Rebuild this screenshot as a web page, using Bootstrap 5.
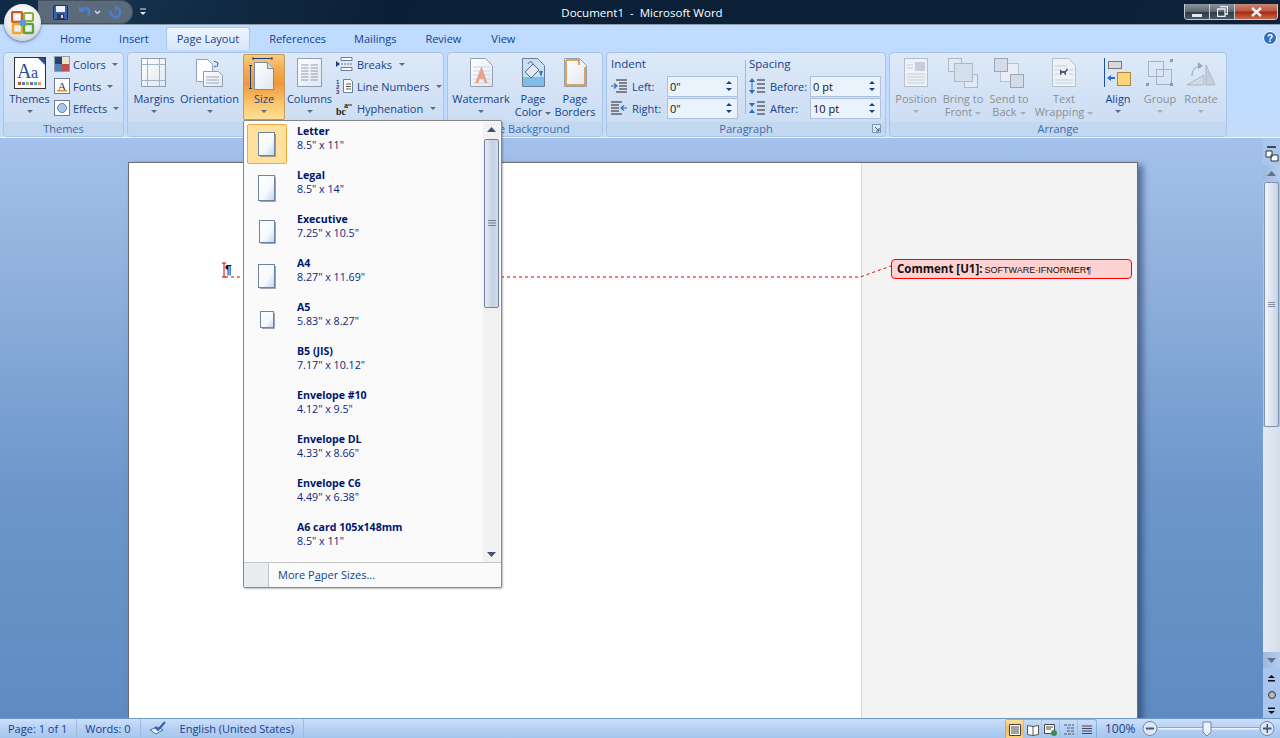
<!DOCTYPE html>
<html lang="en">
<head>
  <meta charset="UTF-8">
  <title>Document1 - Microsoft Word</title>
  <meta name="viewport" content="width=device-width, initial-scale=1">
  <link href="https://cdn.jsdelivr.net/npm/bootstrap@5.3.3/dist/css/bootstrap.min.css" rel="stylesheet">
  <style>
    html, body { height: 100%; overflow: hidden; }
    body { font-family: "Open Sans", "Liberation Sans", sans-serif; font-size: 11px; line-height: 13px; color: #15428b; background: #6a94c8; }
    svg { display: block; flex: none; }
    .app-shell { height: 738px; position: relative; }

    /* title bar */
    .title-bar { height: 25px; background: linear-gradient(100deg, #0f2a44 0%, #16324d 8%, #0b2036 30%, #0d2238 100%); border-bottom: 1px solid #8d9cab; color: #fff; font-size: 11.5px; }
    .title-side { flex: 1 1 0; }
    .title-text { padding-left: 4px; }
    .qat-pill { margin-left: 38px; width: 95px; height: 24px; background: #5b6b7c; border-radius: 0 12px 12px 0; border: 1px solid #44525f; border-left: 0; padding-left: 15px; }
    .qat-undo { margin-left: 8px; }
    .qat-drop { margin-left: 3px; }
    .qat-redo { margin-left: 7px; }
    .qat-more { margin-left: 6px; }
    .win-btns { margin-left: auto; margin-right: 2px; height: 16px; border: 1px solid #c3ccd5; border-top: 0; border-radius: 0 0 4px 4px; overflow: hidden; align-self: flex-start; }
    .win-btn { width: 25px; background: linear-gradient(#8a949e, #5d6873 50%, #2f3a44 55%, #4b5965); border-right: 1px solid #c3ccd5; }
    .win-close { width: 42px; border: 0; background: linear-gradient(#c98876, #ba5a45 45%, #a82a10 55%, #c66a50); }
    .office-orb { position: absolute; left: 4px; top: 4px; width: 37px; height: 37px; border-radius: 50%; background: radial-gradient(circle at 50% 30%, #ffffff 0%, #e8ecef 55%, #b8c2cc 100%); box-shadow: 0 1px 3px rgba(20,40,70,.6); }

    /* tabs */
    .rb-tabs { height: 25px; padding-left: 46px; background: #bfdbff; align-items: flex-end; }
    .rb-tabs .nav-link { padding: 0 14px; height: 23px; line-height: 23px; font-size: 11px; color: #15428b; }
    .rb-tabs .active-tab { margin: 0 5px 0 3px; padding: 0 10px; background: linear-gradient(#eef5fe, #d8e6f9); border: 1px solid #a9c5e8; border-bottom: 0; border-radius: 3px 3px 0 0; color: #15428b; line-height: 21px; }
    .rb-tabs .tab-wide { padding: 0 15px; }
    .help-dot { margin-left: auto; margin-right: 3px; align-self: center; }

    /* ribbon */
    .ribbon { height: 88px; background: linear-gradient(#bfdbff, #bfdbff 60%, #c4dcf8); padding: 2px 3px 0; gap: 3px; border-bottom: 1px solid #e8f2fb; }
    .rb-group { height: 85px; border: 1px solid #a9c4e4; border-radius: 4px; background: linear-gradient(#dde9f8, #cfdff4 70%, #c9dbf2); overflow: hidden; }
    .rb-body { height: 70px; padding-left: 3px; }
    .rb-foot { height: 14px; line-height: 14px; text-align: center; background: #c2d8f0; color: #3e6aaa; }
    .g-themes { width: 121px; }
    .g-setup { width: 317px; }
    .g-bg { width: 156px; }
    .g-para { width: 280px; }
    .g-arrange { width: 338px; }
    .g-arrange .rb-body { padding-left: 2px; }

    .big-btn { height: 66px; margin-top: 1px; text-align: center; align-items: center; }
    .big-ico { height: 32px; margin-top: 3px; margin-bottom: 3px; display: flex; align-items: center; justify-content: center; }
    .is-off { color: #8f8f8f; }
    .w40 { width: 40px; } .w42 { width: 42px; } .w44 { width: 44px; } .w45 { width: 45px; }
    .w46 { width: 46px; } .w47 { width: 47px; } .w48 { width: 48px; } .w60 { width: 60px; }
    .w64 { width: 64px; } .w65 { width: 65px; }
    .size-hot { margin-left: 1px; margin-right: 1px; background: linear-gradient(#f8cd85, #f3a94f 25%, #f0973a 45%, #f9c76c 75%, #fee195); outline: 1px solid #c09b5a; outline-offset: -1px; border-radius: 2px; }
    .tri { width: 0; height: 0; border-left: 3px solid transparent; border-right: 3px solid transparent; border-top: 3px solid #566d8e; display: inline-block; vertical-align: middle; margin-left: 3px; }
    .tri-solo { margin: 5px 0 0; display: block; }
    .is-off .tri { border-top-color: #a8aeb5; }

    .small-col { padding-top: 0; }
    .small-btn { height: 22px; gap: 3px; align-items: center; white-space: nowrap; }
    .g-themes .small-col { margin-left: 2px; }
    .g-setup .small-col { margin-left: 3px; }
    .g-setup .small-btn { gap: 4px; }

    /* paragraph group */
    .para-col { padding: 4px 0 0 1px; }
    .para-head { height: 14px; line-height: 14px; font-size: 11.5px; margin-bottom: 4px; }
    .para-row { height: 22px; align-items: center; }
    .col-indent { width: 134px; }
    .col-space { width: 136px; margin-left: 2px; }
    .para-divider { width: 1px; height: 54px; margin: 7px 0 0 1px; background: #9fb9d9; }
    .para-label { width: 35px; margin-left: 5px; }
    .col-space .para-label { width: 40px; margin-left: 5px; }
    .spin-box { width: 71px; height: 21px; border: 1px solid #abc1de; background: #eaf2fc; padding-left: 2px; color: #111; font-size: 11px; line-height: 19px; justify-content: space-between; }
    .spin-arrows { width: 16px; justify-content: center; align-items: center; gap: 4px; }
    .spin-up { width: 0; height: 0; border-left: 3px solid transparent; border-right: 3px solid transparent; border-bottom: 3px solid #15428b; }
    .spin-down { width: 0; height: 0; border-left: 3px solid transparent; border-right: 3px solid transparent; border-top: 3px solid #15428b; }
    .launcher { position: absolute; right: 4px; bottom: 3px; }

    /* document */
    .doc-area { height: 580px; background: linear-gradient(#a3c1ec, #8fb0dc 25%, #6d97cb 60%, #5e8bc2); }
    .doc-scroll { padding: 24px 0 0 128px; overflow: hidden; }
    .doc-page { position: relative; width: 1010px; height: 600px; background: #fff; border: 1px solid #6d6d6d; border-bottom: 0; box-shadow: 5px 3px 6px rgba(30,50,90,.55); }
    .doc-text { width: 732px; }
    .doc-markup { width: 276px; background: #f3f3f3; border-left: 1px solid #d9d9d9; padding: 96px 6px 0 29px; }
    .balloon { height: 20px; width: 241px; background: #ffd2d2; border: 1px solid #f00; border-radius: 4px; padding-left: 5px; line-height: 18px; color: #111; font-family: "Liberation Sans", sans-serif; white-space: nowrap; }
    .balloon b { font-family: "Open Sans", sans-serif; font-size: 11.5px; font-weight: 700; }
    .balloon span { font-size: 9px; margin-left: 2px; }
    .leader { position: absolute; left: 0; top: 0; pointer-events: none; }
    .para-mark { position: absolute; left: 96px; top: 100px; color: #111; font-size: 12px; line-height: 14px; font-weight: 700; font-family: "Liberation Sans", sans-serif; }

    /* scroll bar right */
    .v-scroll { width: 17px; background: #a9c6ef; }
    .vs-top { height: 27px; padding-top: 8px; align-items: center; }
    .vs-split { width: 9px; height: 2px; background: #3a4a60; margin-bottom: 2px; }
    .vs-arrow { height: 16px; background: linear-gradient(90deg, #9db9dd, #b5cdec); align-items: center; justify-content: center; }
    .vs-thumb { height: 245px; margin: 1px 1px 0; background: linear-gradient(90deg, #f0f4f9, #dbe5f0 50%, #c3d2e4); border: 1px solid #7f93ad; border-radius: 2px; align-items: center; justify-content: center; }
    .vs-track { flex: 1 1 auto; background: linear-gradient(90deg, #e3eaf3, #d4deeb); }
    .vs-browse { height: 50px; padding-top: 7px; align-items: center; justify-content: space-between; padding-bottom: 4px; }

    /* status bar */
    .status-bar { height: 20px; background: linear-gradient(#cbe0fa, #b5d0f3 50%, #a6c6ee); border-top: 1px solid #7197c8; line-height: 19px; color: #15428b; }
    .st-cell { padding: 0 9px 0 8px; border-right: 1px solid #9ebde2; white-space: nowrap; }
    .st-spell { border-right: 0; padding-right: 5px; }
    .st-views { margin-left: auto; margin-right: 8px; border: 1px solid #8eafd8; border-radius: 3px 3px 0 0; border-bottom: 0; height: 19px; }
    .st-view { width: 18px; height: 19px; align-items: center; justify-content: center; border-right: 1px solid #a6c1e3; }
    .st-view-on { background: linear-gradient(#fddf9c, #f8b85f 50%, #fbd27a); }
    .st-zoom { width: 29px; font-size: 12px; }
    .zoom-track { width: 101px; height: 19px; }
    .zoom-end { margin-right: 5px; }

    /* size menu */
    .size-menu { position: absolute; left: 243px; top: 120px; width: 259px; height: 468px; background: #fafafa; border: 1px solid #868686; border-radius: 2px; box-shadow: 1px 1px 2px rgba(0,0,0,.25); z-index: 5; padding-top: 1px; }
    .size-list { height: 440px; }
    .size-items { width: 239px; }
    .size-item { height: 44px; }
    .size-cell { width: 40px; height: 40px; margin: 2px 0 0 3px; display: flex; align-items: center; justify-content: center; border: 1px solid transparent; border-radius: 2px; }
    .size-cell-on { background: #ffe09c; border-color: #f1a83e; }
    .size-txt { margin: 2px 0 0 10px; line-height: 14px; color: #0c1f7a; font-size: 10.7px; }
    .size-txt b { display: block; color: #00156e; font-weight: 700; font-size: 10.6px; }
    .menu-scroll { width: 17px; background: #f1f1f1; }
    .ms-arrow { height: 15px; align-items: center; justify-content: center; }
    .ms-thumb { height: 169px; margin: 2px 1px 0; background: linear-gradient(90deg, #e6ecf4, #c3d1e2 60%, #d5deea); border: 1px solid #6d82a3; border-radius: 2px; align-items: center; justify-content: center; }
    .ms-track { flex: 1 1 auto; }
    .size-foot { height: 25px; border-top: 1px solid #c5c5c5; }
    .foot-ico { width: 25px; background: #e9edf1; border-right: 1px solid #c5c5c5; }
    .foot-txt { padding-left: 9px; line-height: 24px; color: #15428b; }
  </style>
</head>
<body>

<svg width="0" height="0" class="position-absolute">
  <defs>
    <linearGradient id="pageFill" x1="0" y1="0" x2="1" y2="1">
      <stop offset="0" stop-color="#ffffff"/><stop offset=".6" stop-color="#f6f9fd"/><stop offset="1" stop-color="#bcd4ee"/>
    </linearGradient>
    <linearGradient id="docFill" x1="0" y1="0" x2="1" y2="1">
      <stop offset="0" stop-color="#ffffff"/><stop offset="1" stop-color="#dfe7f2"/>
    </linearGradient>
  </defs>
</svg>

<div class="app-shell d-flex flex-column">

  <!-- Title bar -->
  <div class="title-bar d-flex align-items-center flex-none">
    <div class="title-side d-flex align-items-center">
      <div class="qat-pill d-flex align-items-center">
        <svg width="15" height="15" viewBox="0 0 15 15"><rect x=".5" y=".5" width="14" height="14" rx="1" fill="#3b5fb0" stroke="#1b2f66"/><rect x="3" y="1" width="9" height="6" fill="#eef2f8"/><rect x="4" y="9" width="7" height="5" fill="#2c3c58"/><rect x="8" y="10" width="2" height="3" fill="#c9d4e4"/></svg>
        <svg class="qat-undo" width="15" height="14" viewBox="0 0 15 14"><path d="M3 1v6h6L6.800 4.900C9.500 3.800 12 5.500 12 8.200c0 1.700-1 3.200-2.500 4.300 3-.5 5-3 5-5.700C14.500 2.600 9.700.3 5.200 2.900z" fill="#4a7fd0"/></svg>
        <svg class="qat-drop" width="7" height="5" viewBox="0 0 7 5"><path d="M1 1l2.500 2.500L6 1" fill="none" stroke="#dfe6ee" stroke-width="1.200"/></svg>
        <svg class="qat-redo" width="15" height="14" viewBox="0 0 15 14"><path d="M7.500 2.500a4.800 4.800 0 1 1-4.500 3.200" fill="none" stroke="#4a7fd0" stroke-width="2.600"/><path d="M7 0v6l4-3z" fill="#4a7fd0"/></svg>
      </div>
      <svg class="qat-more" width="8" height="8" viewBox="0 0 8 8"><path d="M1 1h6" stroke="#dfe6ee"/><path d="M1 4h6L4 7z" fill="#dfe6ee"/></svg>
    </div>
    <div class="title-text">Document1&nbsp; -&nbsp; Microsoft Word</div>
    <div class="title-side d-flex">
      <div class="win-btns d-flex">
        <div class="win-btn d-flex align-items-center justify-content-center"><svg width="11" height="12" viewBox="0 0 11 12"><rect y="8" width="10" height="3" fill="#e8e8e8"/></svg></div>
        <div class="win-btn d-flex align-items-center justify-content-center"><svg width="11" height="11" viewBox="0 0 11 11"><path d="M3 .5h7.500v7.500H8M.5 3h7.500v7.500H.5z" fill="none" stroke="#eee" stroke-width="1.300"/></svg></div>
        <div class="win-btn win-close d-flex align-items-center justify-content-center"><svg width="11" height="10" viewBox="0 0 11 10"><path d="M1 1l9 8M10 1l-9 8" stroke="#f4f4f4" stroke-width="2.400"/></svg></div>
      </div>
    </div>
  </div>

  <!-- Office button -->
  <div class="office-orb d-flex align-items-center justify-content-center">
    <svg width="24" height="24" viewBox="0 0 24 24">
      <rect x="1" y="1" width="10" height="10" rx="1.500" fill="none" stroke="#d4582c" stroke-width="2.400"/>
      <rect x="13" y="2" width="9" height="8" rx="1" fill="none" stroke="#8fb13c" stroke-width="2.200"/>
      <rect x="2" y="13" width="9" height="9" rx="1" fill="none" stroke="#f0a81e" stroke-width="2.400"/>
      <rect x="13" y="13" width="9" height="9" rx="1" fill="none" stroke="#5ba33a" stroke-width="2.400"/>
      <rect x="9" y="9" width="6" height="6" fill="#5d9bd8"/>
    </svg>
  </div>

  <!-- Tabs -->
  <ul class="nav rb-tabs flex-none">
    <li class="nav-item"><a class="nav-link" href="#">Home</a></li>
    <li class="nav-item"><a class="nav-link" href="#">Insert</a></li>
    <li class="nav-item"><a class="nav-link active-tab" href="#">Page Layout</a></li>
    <li class="nav-item"><a class="nav-link" href="#">References</a></li>
    <li class="nav-item"><a class="nav-link" href="#">Mailings</a></li>
    <li class="nav-item"><a class="nav-link tab-wide" href="#">Review</a></li>
    <li class="nav-item"><a class="nav-link tab-wide" href="#">View</a></li>
    <li class="help-dot">
      <svg width="14" height="14" viewBox="0 0 14 14"><circle cx="7" cy="7" r="6.500" fill="#2f6fc8" stroke="#fff"/><text x="7" y="10.500" font-size="10" font-weight="700" fill="#fff" text-anchor="middle" font-family="Liberation Sans">?</text></svg>
    </li>
  </ul>

  <!-- Ribbon -->
  <div class="ribbon d-flex">

    <div class="rb-group g-themes d-flex flex-column">
      <div class="rb-body d-flex">
        <div class="big-btn w45 d-flex flex-column">
          <div class="big-ico">
            <svg width="32" height="32" viewBox="0 0 32 32"><rect x=".5" y=".5" width="31" height="31" fill="#fff" stroke="#333"/><path d="M24 1h7v7z" fill="#2e4f9a"/><text x="3" y="21" font-family="Liberation Serif" font-size="20" fill="#1f4ea0">A</text><text x="17" y="21" font-family="Liberation Serif" font-size="16" fill="#1f4ea0">a</text><rect x="4" y="25" width="3" height="3" fill="#c0504d"/><rect x="8" y="25" width="3" height="3" fill="#4f81bd"/><rect x="12" y="25" width="3" height="3" fill="#9bbb59"/><rect x="16" y="25" width="3" height="3" fill="#8064a2"/><rect x="20" y="25" width="3" height="3" fill="#4bacc6"/><rect x="24" y="25" width="3" height="3" fill="#f79646"/></svg>
          </div>
          <div>Themes</div>
          <span class="tri tri-solo"></span>
        </div>
        <div class="small-col">
          <div class="small-btn d-flex"><svg width="16" height="16" viewBox="0 0 16 16"><rect x=".5" y=".5" width="15" height="15" fill="#fff" stroke="#8d9db4"/><rect x="1" y="1" width="7" height="7" fill="#26426e"/><rect x="8" y="1" width="7" height="7" fill="#eee6c6"/><rect x="1" y="8" width="7" height="7" fill="#4f81bd"/><rect x="8" y="8" width="7" height="7" fill="#c0504d"/></svg>Colors<span class="tri"></span></div>
          <div class="small-btn d-flex"><svg width="16" height="16" viewBox="0 0 16 16"><rect x=".5" y=".5" width="15" height="15" fill="#fff" stroke="#6d7f9b"/><text x="8" y="13" text-anchor="middle" font-family="Liberation Serif" font-size="13" fill="#15306e">A</text><rect x="3" y="12" width="10" height="1.500" fill="#e09020"/></svg>Fonts<span class="tri"></span></div>
          <div class="small-btn d-flex"><svg width="16" height="16" viewBox="0 0 16 16"><rect x=".5" y=".5" width="15" height="15" fill="#fff" stroke="#6d7f9b"/><circle cx="8" cy="8" r="4.500" fill="#a8c8ea" stroke="#5a82b4"/></svg>Effects<span class="tri"></span></div>
        </div>
      </div>
      <div class="rb-foot">Themes</div>
    </div>

    <div class="rb-group g-setup d-flex flex-column">
      <div class="rb-body d-flex">
        <div class="big-btn w46 d-flex flex-column">
          <div class="big-ico"><svg width="26" height="30" viewBox="0 0 26 30"><rect x=".5" y=".5" width="24" height="28" fill="url(#docFill)" stroke="#8f9fb4"/><path d="M6.500 1v27M18.500 1v27M1 6.500h23M1 22.500h23" stroke="#a5b3c6" fill="none"/></svg></div>
          <div>Margins</div><span class="tri tri-solo"></span>
        </div>
        <div class="big-btn w65 d-flex flex-column">
          <div class="big-ico"><svg width="30" height="30" viewBox="0 0 30 30"><path d="M1.500 1.500h11l5 5v17h-16z" fill="#fff" stroke="#8f9fb4"/><path d="M8.500 13.500h15l4 4v11h-19z" fill="url(#docFill)" stroke="#8f9fb4"/><path d="M11 19h13M11 22h13M11 25h13" stroke="#9aa9bd"/><path d="M19 3l4 2-1 4M19 9l2-1" fill="none" stroke="#4a5f80"/></svg></div>
          <div>Orientation</div><span class="tri tri-solo"></span>
        </div>
        <div class="big-btn w42 size-hot d-flex flex-column">
          <div class="big-ico"><svg width="30" height="33" viewBox="0 0 30 33"><path d="M4 1.500h19M4 0v3M23 0v3M0 8.500h3M0 31.500h3M1.500 8v24" stroke="#1f3f78" fill="none"/><path d="M5.500 5.500h13l6 6v21h-19z" fill="url(#docFill)" stroke="#7c8ca4"/><path d="M18.500 5.500v6h6" fill="#cfd9e8" stroke="#7c8ca4"/></svg></div>
          <div>Size</div><span class="tri tri-solo"></span>
        </div>
        <div class="big-btn w47 d-flex flex-column">
          <div class="big-ico"><svg width="26" height="30" viewBox="0 0 26 30"><rect x=".5" y=".5" width="24" height="28" fill="url(#docFill)" stroke="#8f9fb4"/><path d="M4 7h7.500M13.500 7H21M4 10h7.500M13.500 10H21M4 13h7.500M13.500 13H21M4 16h7.500M13.500 16H21M4 19h7.500M13.500 19H21M4 22h7.500M13.500 22H21" stroke="#8d9cb0"/></svg></div>
          <div>Columns</div><span class="tri tri-solo"></span>
        </div>
        <div class="small-col">
          <div class="small-btn d-flex"><svg width="17" height="16" viewBox="0 0 17 16"><path d="M5 1.500h11v3H5zM5 11.500h11v3H5z" fill="#fff" stroke="#6a7d98"/><path d="M5 8h11" stroke="#6a7d98" stroke-dasharray="2 1"/><path d="M0 5l4 3-4 3z" fill="#1f3f78"/></svg>Breaks<span class="tri"></span></div>
          <div class="small-btn d-flex"><svg width="17" height="16" viewBox="0 0 17 16"><path d="M7.500 1.500h7l2 2v11h-9z" fill="#fff" stroke="#6a7d98"/><path d="M10 6h5M10 8.500h5M10 11h5" stroke="#555"/><text x="0" y="6" font-size="6" font-weight="700" fill="#1f3f78" font-family="Liberation Sans">1</text><text x="0" y="11" font-size="6" font-weight="700" fill="#1f3f78" font-family="Liberation Sans">2</text><text x="0" y="16" font-size="6" font-weight="700" fill="#1f3f78" font-family="Liberation Sans">3</text></svg>Line Numbers<span class="tri"></span></div>
          <div class="small-btn d-flex"><svg width="17" height="16" viewBox="0 0 17 16"><text x="0" y="15" font-size="10" font-weight="700" fill="#222" font-family="Liberation Serif">bc</text><text x="8" y="8" font-size="8" font-weight="700" fill="#222" font-family="Liberation Serif">a</text><path d="M12 5h4" stroke="#222"/></svg>Hyphenation<span class="tri"></span></div>
        </div>
      </div>
      <div class="rb-foot"></div>
    </div>

    <div class="rb-group g-bg d-flex flex-column">
      <div class="rb-body d-flex">
        <div class="big-btn w60 d-flex flex-column">
          <div class="big-ico"><svg width="23" height="30" viewBox="0 0 23 30"><path d="M.5.500h15l7 7v21H.500z" fill="url(#docFill)" stroke="#8f9fb4"/><path d="M3 9h17M3 13h17M3 17h17M3 21h17M3 25h17" stroke="#cfd7e2"/><path d="M11.500 8l6 17h-3l-1.200-4H9.500l-1.200 4h-3z" fill="#e5a28e"/></svg></div>
          <div>Watermark</div><span class="tri tri-solo"></span>
        </div>
        <div class="big-btn w44 d-flex flex-column">
          <div class="big-ico"><svg width="23" height="30" viewBox="0 0 23 30"><path d="M.5.500h15l7 7v21H.500z" fill="#c9e1f6" stroke="#6a7d98"/><rect x="1" y="19" width="21" height="9" fill="#7fbde8"/><path d="M3 14l8-8 6 6-8 8z" fill="#e4e8ee" stroke="#56677f"/><path d="M6 6c1-3 4-3 5 0" fill="none" stroke="#56677f"/><path d="M17 13l2 6 2-6z" fill="#2f72c4"/></svg></div>
          <div>Page<br>Color<span class="tri"></span></div>
        </div>
        <div class="big-btn w40 d-flex flex-column">
          <div class="big-ico"><svg width="23" height="30" viewBox="0 0 23 30"><path d="M.5.500h15l7 7v21H.500z" fill="url(#docFill)" stroke="#8f9fb4"/><path d="M2 2h13v5M2 2v25h19V9" fill="none" stroke="#d98a2c" stroke-width="1.500"/></svg></div>
          <div>Page<br>Borders</div>
        </div>
      </div>
      <div class="rb-foot">Page Background</div>
    </div>

    <div class="rb-group g-para d-flex flex-column position-relative">
      <div class="rb-body d-flex">
        <div class="para-col col-indent">
          <div class="para-head">Indent</div>
          <div class="para-row d-flex">
            <svg width="16" height="16" viewBox="0 0 16 16"><path d="M5 2h11M8 5h8M8 8h8M8 11h8M5 14h11" stroke="#222" stroke-width="1.200"/><path d="M0 8h5M3 5.500L6 8l-3 2.500" fill="none" stroke="#2c6bc4" stroke-width="1.200"/></svg>
            <div class="para-label">Left:</div>
            <div class="spin-box d-flex">0"<div class="spin-arrows d-flex flex-column"><span class="spin-up"></span><span class="spin-down"></span></div></div>
          </div>
          <div class="para-row d-flex">
            <svg width="16" height="16" viewBox="0 0 16 16"><path d="M0 2h11M0 5h8M0 8h8M0 11h8M0 14h11" stroke="#222" stroke-width="1.200"/><path d="M16 8h-5M13 5.500L10 8l3 2.500" fill="none" stroke="#2c6bc4" stroke-width="1.200"/></svg>
            <div class="para-label">Right:</div>
            <div class="spin-box d-flex">0"<div class="spin-arrows d-flex flex-column"><span class="spin-up"></span><span class="spin-down"></span></div></div>
          </div>
        </div>
        <div class="para-divider"></div>
        <div class="para-col col-space">
          <div class="para-head">Spacing</div>
          <div class="para-row d-flex">
            <svg width="16" height="16" viewBox="0 0 16 16"><path d="M8 2h8M8 6h8M8 10h8M8 14h8" stroke="#222" stroke-width="1.200"/><path d="M3 0L0 4h6zM3 16l3-4H0z" fill="#2c6bc4"/><path d="M3 3v10" stroke="#2c6bc4"/></svg>
            <div class="para-label">Before:</div>
            <div class="spin-box d-flex">0 pt<div class="spin-arrows d-flex flex-column"><span class="spin-up"></span><span class="spin-down"></span></div></div>
          </div>
          <div class="para-row d-flex">
            <svg width="16" height="16" viewBox="0 0 16 16"><path d="M8 2h8M8 6h8M8 10h8M8 14h8" stroke="#222" stroke-width="1.200"/><path d="M3 7L0 3h6zM3 9l3 4H0z" fill="#2c6bc4"/></svg>
            <div class="para-label">After:</div>
            <div class="spin-box d-flex">10 pt<div class="spin-arrows d-flex flex-column"><span class="spin-up"></span><span class="spin-down"></span></div></div>
          </div>
        </div>
      </div>
      <div class="rb-foot">Paragraph</div>
      <svg class="launcher" width="9" height="9" viewBox="0 0 9 9"><path d="M.5.500h8v8h-8z" fill="#dfe9f6" stroke="#7d96b8"/><path d="M3 3l4 4M7 4v3H4" fill="none" stroke="#44587a"/></svg>
    </div>

    <div class="rb-group g-arrange d-flex flex-column">
      <div class="rb-body d-flex">
        <div class="big-btn w48 is-off d-flex flex-column">
          <div class="big-ico"><svg width="24" height="30" viewBox="0 0 24 30"><rect x=".5" y=".5" width="23" height="28" fill="#eef2f7" stroke="#b4bfcd"/><rect x="11" y="4" width="10" height="9" fill="#c5cfdb"/><path d="M3 7h6M3 10h6M3 16h18M3 19h18M3 22h18M3 25h18" stroke="#c5cdd8"/></svg></div>
          <div>Position</div><span class="tri tri-solo"></span>
        </div>
        <div class="big-btn w46 is-off d-flex flex-column">
          <div class="big-ico"><svg width="30" height="30" viewBox="0 0 30 30"><rect x=".5" y=".5" width="13" height="13" fill="#e2e9f2" stroke="#aeb9c8"/><rect x="16.500" y="16.500" width="13" height="13" fill="#e2e9f2" stroke="#aeb9c8"/><rect x="6.500" y="5.500" width="18" height="18" fill="#d6e0ec" stroke="#aeb9c8"/></svg></div>
          <div>Bring to<br>Front<span class="tri"></span></div>
        </div>
        <div class="big-btn w46 is-off d-flex flex-column">
          <div class="big-ico"><svg width="30" height="30" viewBox="0 0 30 30"><rect x="6.500" y="5.500" width="18" height="18" fill="#e8eef5" stroke="#b8c2d0"/><rect x=".5" y=".5" width="13" height="13" fill="#d3dce8" stroke="#98a6b8"/><rect x="16.500" y="16.500" width="13" height="13" fill="#d3dce8" stroke="#98a6b8"/></svg></div>
          <div>Send to<br>Back<span class="tri"></span></div>
        </div>
        <div class="big-btn w64 is-off d-flex flex-column">
          <div class="big-ico"><svg width="24" height="30" viewBox="0 0 24 30"><path d="M.5.500h16l7 7v21H.500z" fill="#eef2f7" stroke="#b4bfcd"/><path d="M3 8h12M3 22h18M3 25h18M3 12h4M17 12h4M3 16h4M17 16h4" stroke="#c5cdd8"/><path d="M8 11l2 2h3l2-3 1 2-2 2v3h-1l-1-2h-2l-1 2H8z" fill="#4d5b70"/></svg></div>
          <div>Text<br>Wrapping<span class="tri"></span></div>
        </div>
        <div class="big-btn w44 d-flex flex-column">
          <div class="big-ico"><svg width="28" height="30" viewBox="0 0 28 30"><path d="M.5 0v29" stroke="#1f4f9a"/><rect x="4.500" y="3.500" width="13" height="7" fill="#d9d9d9" stroke="#777"/><rect x="13.500" y="14.500" width="13" height="13" fill="#fdd477" stroke="#a88a3c"/><path d="M3 20l4-3v2h4v2H7v2z" fill="#2c6bc4"/></svg></div>
          <div>Align</div><span class="tri tri-solo"></span>
        </div>
        <div class="big-btn w40 is-off d-flex flex-column">
          <div class="big-ico"><svg width="28" height="28" viewBox="0 0 28 28"><rect x="2.500" y="2.500" width="15" height="15" fill="none" stroke="#a6b2c2"/><rect x="10.500" y="10.500" width="15" height="15" fill="none" stroke="#a6b2c2"/><path d="M0 24h3v3H0zM24 0h3v3h-3zM24 24h3v3h-3z" fill="#8d9aac"/></svg></div>
          <div>Group</div><span class="tri tri-solo"></span>
        </div>
        <div class="big-btn w42 is-off d-flex flex-column">
          <div class="big-ico"><svg width="30" height="28" viewBox="0 0 30 28"><path d="M1 26l17-10v10z" fill="#d0d9e4" stroke="#aeb9c8"/><path d="M20 26V6l9 20z" fill="#c5cfdb" stroke="#aeb9c8"/><path d="M6 17c0-6 3-9 8-10" fill="none" stroke="#98a6b8"/><path d="M12 3l5 4-5 3z" fill="#98a6b8"/></svg></div>
          <div>Rotate</div><span class="tri tri-solo"></span>
        </div>
      </div>
      <div class="rb-foot">Arrange</div>
    </div>
  </div>

  <!-- Document area -->
  <div class="doc-area d-flex">
    <div class="doc-scroll flex-grow-1">
      <div class="doc-page d-flex">
        <div class="doc-text"></div>
        <div class="doc-markup">
          <div class="balloon"><b>Comment [U1]:</b><span>SOFTWARE·IFNORMER¶</span></div>
        </div>
        <div class="para-mark">¶</div>
        <svg class="leader" width="1008" height="140" viewBox="0 0 1008 140">
          <path d="M95 100v14M93 100h4M93 114h4" stroke="#d00" fill="none"/>
          <path d="M96 114H731L762 103" fill="none" stroke="#e00000" stroke-dasharray="3 3"/>
        </svg>
      </div>
    </div>
    <div class="v-scroll d-flex flex-column">
      <div class="vs-top d-flex flex-column">
        <div class="vs-split"></div>
        <svg width="14" height="12" viewBox="0 0 14 12"><path d="M1 1h6v6H1zM6 5h7v6H6z" fill="#fff" stroke="#333"/></svg>
      </div>
      <div class="vs-arrow d-flex"><svg width="9" height="5" viewBox="0 0 9 5"><path d="M4.500 0L9 5H0z" fill="#5c7396"/></svg></div>
      <div class="vs-thumb d-flex"><svg width="7" height="5" viewBox="0 0 7 5"><path d="M0 .5h7M0 2.500h7M0 4.500h7" stroke="#7f8fa4"/></svg></div>
      <div class="vs-track"></div>
      <div class="vs-arrow d-flex"><svg width="9" height="5" viewBox="0 0 9 5"><path d="M4.500 5L9 0H0z" fill="#5c7396"/></svg></div>
      <div class="vs-browse d-flex flex-column">
        <svg width="7" height="7" viewBox="0 0 7 7"><path d="M3.500 0L7 3H0zM0 5h7v1.500H0z" fill="#111"/></svg>
        <svg width="8" height="8" viewBox="0 0 8 8"><circle cx="4" cy="4" r="3.500" fill="#b9b9b9" stroke="#333"/></svg>
        <svg width="7" height="7" viewBox="0 0 7 7"><path d="M3.500 7L7 4H0zM0 .5h7V2H0z" fill="#111"/></svg>
      </div>
    </div>
  </div>

  <!-- Status bar -->
  <div class="status-bar d-flex">
    <div class="st-cell">Page: 1 of 1</div>
    <div class="st-cell">Words: 0</div>
    <div class="st-cell st-spell d-flex align-items-center">
      <svg width="18" height="15" viewBox="0 0 18 15"><path d="M1 9l7-3 6 3-7 4z" fill="#eef3fa" stroke="#4f6c96"/><path d="M6 6l3 3 7-8" fill="none" stroke="#2c5fa8" stroke-width="2"/></svg>
    </div>
    <div class="st-cell">English (United States)</div>
    <div class="st-views d-flex">
      <div class="st-view st-view-on d-flex"><svg width="12" height="12" viewBox="0 0 12 12"><path d="M.5.500h11v11H.5z" fill="#fff" stroke="#444"/><path d="M2 3h8M2 5h8M2 7h8M2 9h8" stroke="#444"/></svg></div>
      <div class="st-view d-flex"><svg width="12" height="12" viewBox="0 0 12 12"><path d="M.5 1.500L6 2.500l5.500-1v9L6 11.500l-5.500-1zM6 2.500v9" fill="#fff" stroke="#555"/></svg></div>
      <div class="st-view d-flex"><svg width="13" height="12" viewBox="0 0 13 12"><path d="M.5.500h10v9H.5z" fill="#fff" stroke="#444"/><path d="M2 3h7M2 5h5" stroke="#444"/><circle cx="10" cy="9" r="3" fill="#3f8c5a"/></svg></div>
      <div class="st-view d-flex"><svg width="12" height="12" viewBox="0 0 12 12"><path d="M1 1h10M4 4h7M4 7h7M1 10h10" stroke="#556" stroke-dasharray="3 1"/></svg></div>
      <div class="st-view border-0 d-flex"><svg width="12" height="10" viewBox="0 0 12 10"><path d="M1 1h10M1 3.500h10M1 6h10M1 8.500h10" stroke="#445"/></svg></div>
    </div>
    <div class="st-zoom">100%</div>
    <svg class="ms-2" width="16" height="19" viewBox="0 0 16 19"><circle cx="8" cy="9.500" r="7" fill="#dde8f6" stroke="#6e87a8"/><rect x="4" y="8.500" width="8" height="2" fill="#44587a"/></svg>
    <svg class="zoom-track" viewBox="0 0 101 19"><path d="M0 9.500h101" stroke="#eef4fc" stroke-width="2"/><path d="M0 8.500h101" stroke="#8ea9cc"/><path d="M45 3h8v10l-4 4-4-4z" fill="#eef3fa" stroke="#6e87a8"/></svg>
    <svg class="zoom-end" width="16" height="19" viewBox="0 0 16 19"><circle cx="8" cy="9.500" r="7" fill="#dde8f6" stroke="#6e87a8"/><path d="M4 8.500h3.500V5h1.500v3.500h3.500v2H9V14H7.500v-3.500H4z" fill="#44587a"/></svg>
  </div>

  <!-- Size dropdown -->
  <div class="size-menu d-flex flex-column">
    <div class="size-list d-flex">
      <div class="size-items">
        <div class="size-item d-flex"><div class="size-cell size-cell-on"><svg width="18" height="25" viewBox="0 0 18 25"><rect x=".5" y=".5" width="16" height="23" fill="url(#pageFill)" stroke="#6d84a6"/><path d="M17.500 2v22.500H2" fill="none" stroke="#5a6a80" opacity=".6"/></svg></div><div class="size-txt"><b>Letter</b>8.5" x 11"</div></div>
        <div class="size-item d-flex"><div class="size-cell"><svg width="18" height="27" viewBox="0 0 18 27"><rect x=".5" y=".5" width="16" height="25" fill="url(#pageFill)" stroke="#6d84a6"/><path d="M17.500 2v24.500H2" fill="none" stroke="#5a6a80" opacity=".6"/></svg></div><div class="size-txt"><b>Legal</b>8.5" x 14"</div></div>
        <div class="size-item d-flex"><div class="size-cell"><svg width="17" height="24" viewBox="0 0 17 24"><rect x=".5" y=".5" width="15" height="22" fill="url(#pageFill)" stroke="#6d84a6"/><path d="M16.500 2v21.500H2" fill="none" stroke="#5a6a80" opacity=".6"/></svg></div><div class="size-txt"><b>Executive</b>7.25" x 10.5"</div></div>
        <div class="size-item d-flex"><div class="size-cell"><svg width="18" height="25" viewBox="0 0 18 25"><rect x=".5" y=".5" width="16" height="23" fill="url(#pageFill)" stroke="#6d84a6"/><path d="M17.500 2v22.500H2" fill="none" stroke="#5a6a80" opacity=".6"/></svg></div><div class="size-txt"><b>A4</b>8.27" x 11.69"</div></div>
        <div class="size-item d-flex"><div class="size-cell"><svg width="15" height="18" viewBox="0 0 15 18"><rect x=".5" y=".5" width="13" height="16" fill="url(#pageFill)" stroke="#6d84a6"/><path d="M14.500 2v15.500H2" fill="none" stroke="#5a6a80" opacity=".6"/></svg></div><div class="size-txt"><b>A5</b>5.83" x 8.27"</div></div>
        <div class="size-item d-flex"><div class="size-cell"></div><div class="size-txt"><b>B5 (JIS)</b>7.17" x 10.12"</div></div>
        <div class="size-item d-flex"><div class="size-cell"></div><div class="size-txt"><b>Envelope #10</b>4.12" x 9.5"</div></div>
        <div class="size-item d-flex"><div class="size-cell"></div><div class="size-txt"><b>Envelope DL</b>4.33" x 8.66"</div></div>
        <div class="size-item d-flex"><div class="size-cell"></div><div class="size-txt"><b>Envelope C6</b>4.49" x 6.38"</div></div>
        <div class="size-item d-flex"><div class="size-cell"></div><div class="size-txt"><b>A6 card 105x148mm</b>8.5" x 11"</div></div>
      </div>
      <div class="menu-scroll d-flex flex-column">
        <div class="ms-arrow d-flex"><svg width="9" height="5" viewBox="0 0 9 5"><path d="M4.500 0L9 5H0z" fill="#3f5170"/></svg></div>
        <div class="ms-thumb d-flex"><svg width="8" height="7" viewBox="0 0 8 7"><path d="M0 .5h8M0 3h8M0 5.500h8" stroke="#6f7f96"/></svg></div>
        <div class="ms-track"></div>
        <div class="ms-arrow d-flex"><svg width="9" height="5" viewBox="0 0 9 5"><path d="M4.500 5L9 0H0z" fill="#3f5170"/></svg></div>
      </div>
    </div>
    <div class="size-foot d-flex">
      <div class="foot-ico"></div>
      <div class="foot-txt">More P<u>a</u>per Sizes...</div>
    </div>
  </div>
</div>

<script src="https://cdn.jsdelivr.net/npm/bootstrap@5.3.3/dist/js/bootstrap.bundle.min.js"></script>
</body>
</html>
